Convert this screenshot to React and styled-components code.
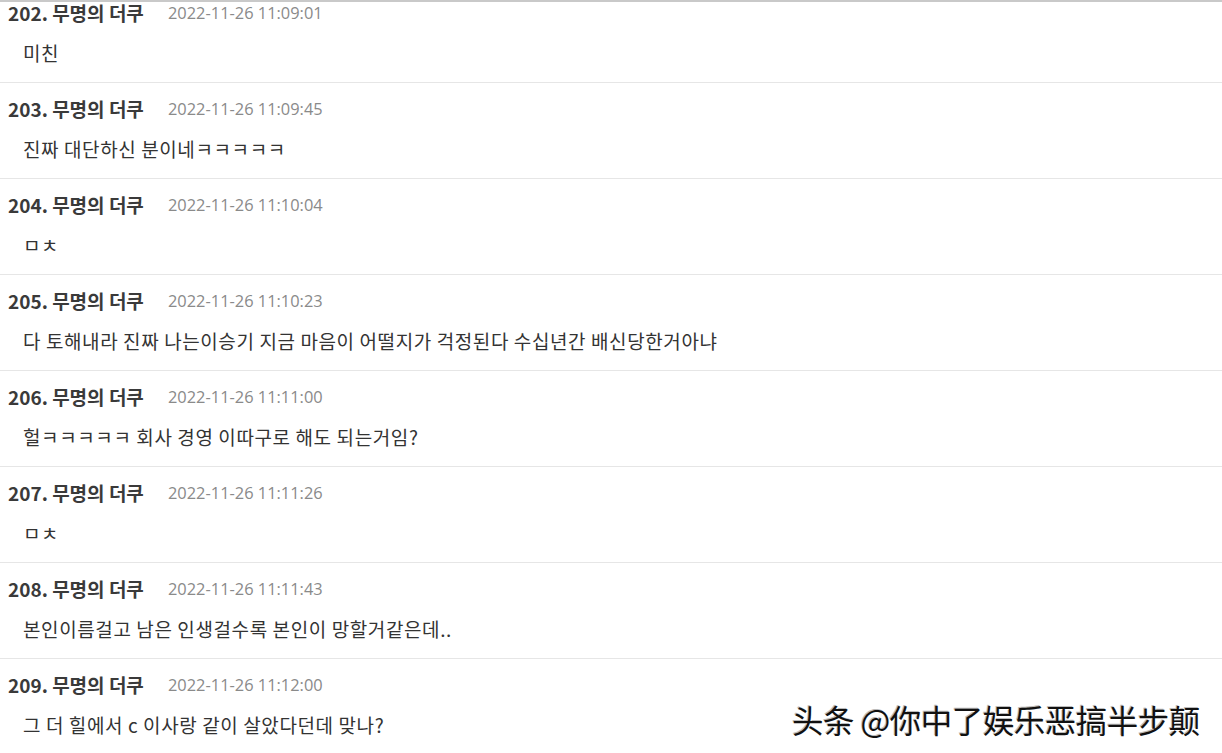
import React from "react";
import styled, { createGlobalStyle } from "styled-components";

const GlobalStyle = createGlobalStyle`
  html, body {
    margin: 0;
    padding: 0;
    background: #fff;
    overflow: hidden;
  }
`;

const Page = styled.div`
  position: relative;
  width: 1222px;
  height: 753px;
  overflow: hidden;
  border-top: 2px solid #c9c9c9;
  box-sizing: border-box;
  font-family: "Noto Sans CJK KR", "Noto Sans", sans-serif;
`;

const List = styled.div`
  display: flex;
  flex-direction: column;
  margin-top: -15px;
`;

const Row = styled.div`
  height: 96px;
  box-sizing: border-box;
  border-bottom: 1px solid #e6e6e6;
  padding-top: 13px;
  display: flex;
  flex-direction: column;
`;

const Header = styled.div`
  display: flex;
  align-items: center;
  height: 24px;
  padding-left: 8px;
`;

const Name = styled.span`
  font-size: 19px;
  font-weight: 700;
  color: #3a3a3a;
  width: 160px;
`;

const Date = styled.span`
  font-family: "Open Sans", "Liberation Sans", sans-serif;
  font-size: 16.4px;
  color: #8a8a8a;
`;

const Body = styled.div`
  margin-top: 17px;
  height: 24px;
  line-height: 24px;
  padding-left: 23px;
  font-size: 19px;
  letter-spacing: 0.6px;
  color: #333;
`;

const Watermark = styled.div`
  position: absolute;
  left: 792px;
  top: 694px;
  font-family: "Noto Sans CJK SC", sans-serif;
  font-size: 31.5px;
  font-weight: 400;
  color: #111;
  letter-spacing: -0.5px;
  text-shadow: 1px 1px 0 #fff, -1px -1px 0 #bbb;
`;

const comments = [
  ["202", "11:09:01", "미친"],
  ["203", "11:09:45", "진짜 대단하신 분이네ㅋㅋㅋㅋㅋ"],
  ["204", "11:10:04", "ㅁㅊ"],
  ["205", "11:10:23", "다 토해내라 진짜 나는이승기 지금 마음이 어떨지가 걱정된다 수십년간 배신당한거아냐"],
  ["206", "11:11:00", "헐ㅋㅋㅋㅋㅋ 회사 경영 이따구로 해도 되는거임?"],
  ["207", "11:11:26", "ㅁㅊ"],
  ["208", "11:11:43", "본인이름걸고 남은 인생걸수록 본인이 망할거같은데.."],
  ["209", "11:12:00", "그 더 힐에서 c 이사랑 같이 살았다던데 맞나?"],
];

export default function App() {
  return (
    <>
      <GlobalStyle />
      <Page>
        <List>
          {comments.map(([num, time, text]) => (
            <Row key={num}>
              <Header>
                <Name>{num}. 무명의 더쿠</Name>
                <Date>2022-11-26 {time}</Date>
              </Header>
              <Body>{text}</Body>
            </Row>
          ))}
        </List>
        <Watermark>头条 @你中了娱乐恶搞半步颠</Watermark>
      </Page>
    </>
  );
}
